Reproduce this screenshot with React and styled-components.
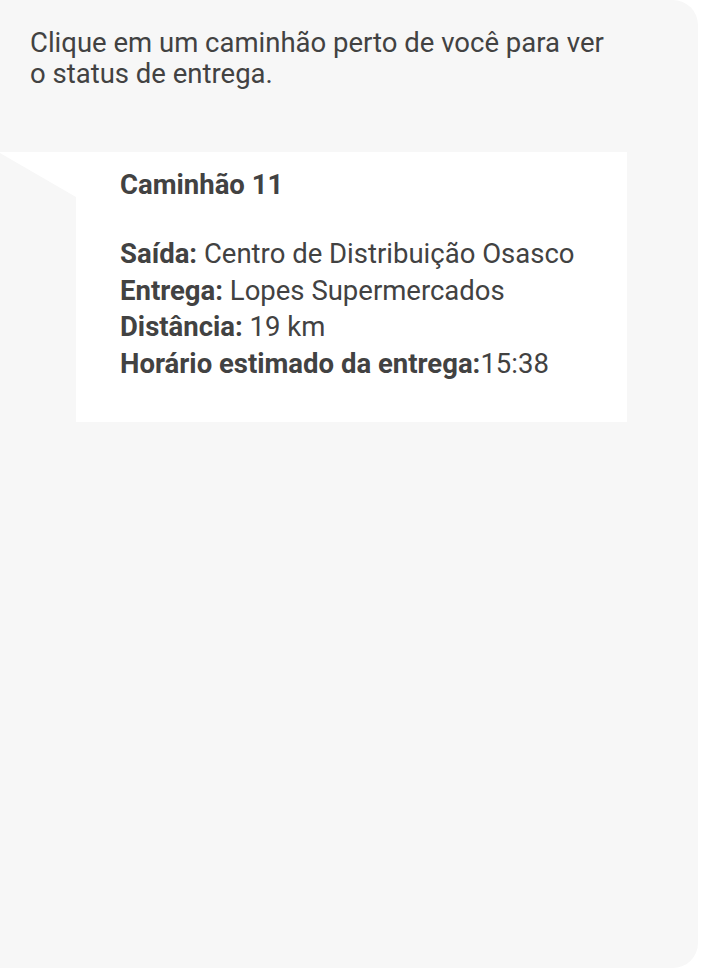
import React from 'react'
import styled, { createGlobalStyle } from 'styled-components'

const GlobalStyle = createGlobalStyle`
    body {
        margin: 0;
        background: #ffffff;
        font-family: Roboto, "Liberation Sans", sans-serif;
    }
`

const truck = {
    name: 'Caminhão 11',
    details: [
        { label: 'Saída:', value: ' Centro de Distribuição Osasco' },
        { label: 'Entrega:', value: ' Lopes Supermercados' },
        { label: 'Distância:', value: ' 19 km' },
        { label: 'Horário estimado da entrega:', value: '15:38' },
    ],
}

export default function App() {
    return (
        <>
            <GlobalStyle />
            <Panel>
                <Intro>
                    Clique em um caminhão perto de você para ver
                    <br />o status de entrega.
                </Intro>
                <Popup>
                    <Pointer />
                    <InfoBox>
                        <Title>{truck.name}</Title>
                        <Details>
                            {truck.details.map(d => (
                                <Line key={d.label}>
                                    <b>{d.label}</b>{d.value}
                                </Line>
                            ))}
                        </Details>
                    </InfoBox>
                </Popup>
            </Panel>
        </>
    )
}

const Panel = styled.div`
    width: 698px;
    height: 968px;
    background: #f7f7f7;
    border-radius: 0 25px 25px 0;
    display: flex;
    flex-direction: column;
    color: #424242;
`

const Intro = styled.p`
    margin: 0;
    padding: 27px 30px 0;
    font-size: 27.5px;
    line-height: 31px;
    height: 152px;
    box-sizing: border-box;
`

const Popup = styled.div`
    display: flex;
    align-items: flex-start;
`

const Pointer = styled.div`
    width: 76px;
    height: 45px;
    background: #ffffff;
    clip-path: polygon(0 0, 100% 0, 100% 100%, 0 2%);
`

const InfoBox = styled.div`
    width: 551px;
    height: 270px;
    box-sizing: border-box;
    background: #ffffff;
    padding: 17px 44px 0;
`

const Title = styled.div`
    font-size: 27.5px;
    font-weight: 700;
    line-height: 32px;
    margin-bottom: 35px;
`

const Details = styled.div`
    font-size: 27.5px;
    line-height: 36.7px;
`

const Line = styled.div`
    b {
        font-weight: 700;
    }
`
